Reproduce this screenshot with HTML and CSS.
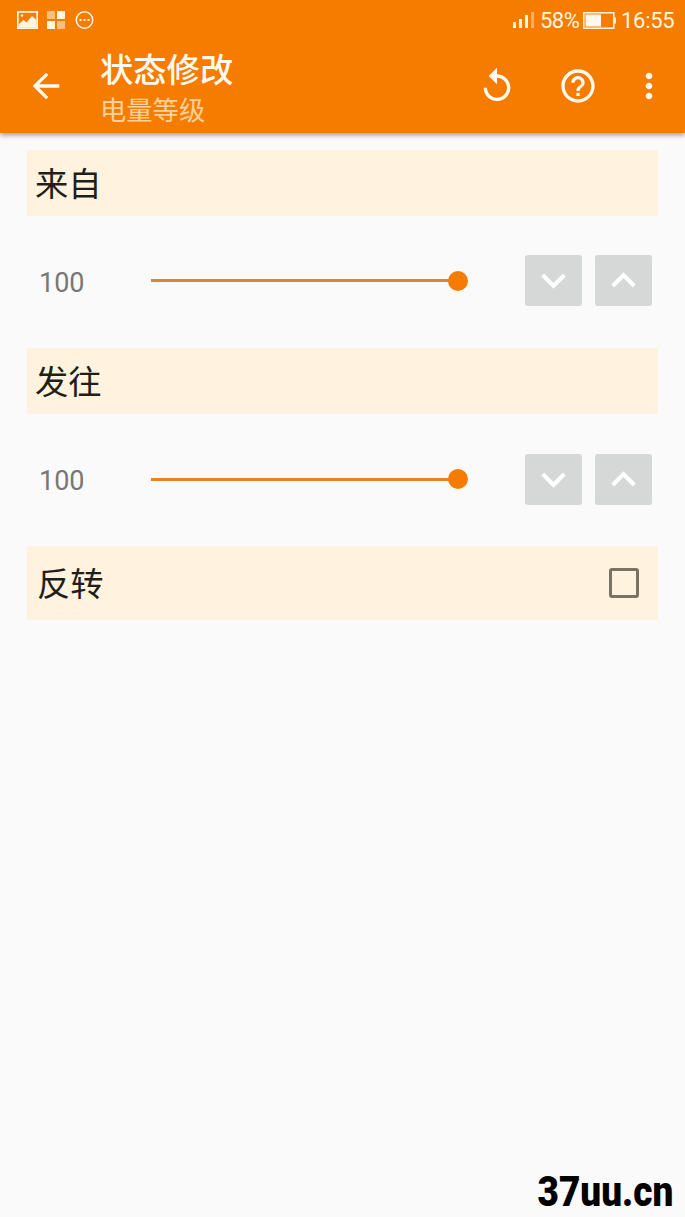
FILE: index.html
```
<!DOCTYPE html>
<html lang="zh-CN">
<head>
    <meta charset="UTF-8">
    <meta name="viewport" content="width=device-width, initial-scale=1.0">
    <title>状态修改</title>
    <link rel="stylesheet" href="styles.css">
</head>
<body>
    <header>
        <div class="status-bar">
            <svg class="status-left" width="80" height="20" viewBox="0 0 80 20">
                <path fill="#fff6e0" fill-rule="evenodd" d="M0 1h21v18H0zM1.7 2.7v14.6h17.6V2.7z"/>
                <path fill="#fff6e0" d="M1.500 17.500v-3l5-4.500 3 2.500 5.500-6.500 4.500 4v7.500z"/>
                <circle cx="5" cy="5.500" r="1.200" fill="#fff6e0"/>
                <path fill="#fbc080" d="M30 1h8v8h-8zM40 11h8v8h-8z"/>
                <path fill="#fff6e0" d="M40 1h8v8h-8zM30 11h8v8h-8z"/>
                <circle cx="67.500" cy="10" r="8.200" fill="none" stroke="#fff6e0" stroke-width="1.500"/>
                <path fill="#fff6e0" d="M62.500 9h2v2h-2zM66.500 9h2v2h-2zM70.500 9h2v2h-2z"/>
            </svg>
            <svg class="signal" width="21" height="16" viewBox="0 0 21 16">
                <path fill="#fff6e0" d="M0 10h3v6H0zM6 7h3v9H6zM12 3h3v13h-3z"/>
                <path fill="#fbb266" d="M18 0h3v16h-3z"/>
            </svg>
            <span class="percent">58%</span>
            <svg class="battery" width="33" height="17" viewBox="0 0 33 17">
                <rect x=".8" y=".8" width="30" height="15.400" fill="none" stroke="#fff6e0" stroke-width="1.500"/>
                <path fill="#fffaf0" d="M2.500 2.500h15.500v12h-15.500z"/>
                <path fill="#fff6e0" d="M31 5.500h2v6h-2z"/>
            </svg>
            <span class="clock">16:55</span>
        </div>
        <div class="app-bar">
            <svg class="icon back" viewBox="0 0 24 24"><path d="M20 11H7.830l5.590-5.590L12 4l-8 8 8 8 1.410-1.410L7.830 13H20v-2z"/></svg>
            <div class="titles">
                <h1>状态修改</h1>
                <p>电量等级</p>
            </div>
            <svg class="icon replay" viewBox="0 0 24 24"><path d="M12 5V1L7 6l5 5V7c3.310 0 6 2.690 6 6s-2.690 6-6 6-6-2.690-6-6H4c0 4.420 3.580 8 8 8s8-3.580 8-8-3.580-8-8-8z"/></svg>
            <svg class="icon help" viewBox="0 0 24 24"><path d="M11 18h2v-2h-2v2zm1-16C6.480 2 2 6.480 2 12s4.480 10 10 10 10-4.480 10-10S17.520 2 12 2zm0 18c-4.410 0-8-3.590-8-8s3.590-8 8-8 8 3.590 8 8-3.590 8-8 8zm0-14c-2.210 0-4 1.790-4 4h2c0-1.100.9-2 2-2s2 .9 2 2c0 2-3 1.750-3 5h2c0-2.250 3-2.500 3-5 0-2.210-1.790-4-4-4z"/></svg>
            <svg class="icon more" viewBox="0 0 24 24"><path d="M12 8c1.100 0 2-.9 2-2s-.9-2-2-2-2 .9-2 2 .9 2 2 2zm0 2c-1.100 0-2 .9-2 2s.9 2 2 2 2-.9 2-2-.9-2-2-2zm0 6c-1.100 0-2 .9-2 2s.9 2 2 2 2-.9 2-2-.9-2-2-2z"/></svg>
        </div>
    </header>

    <main>
        <h2>来自</h2>
        <div class="level">
            <span class="value">100</span>
            <div class="slider"><div class="thumb"></div></div>
            <button><svg viewBox="0 0 24 24"><path d="M7.410 8.590L12 13.170l4.590-4.580L18 10l-6 6-6-6z"/></svg></button>
            <button><svg viewBox="0 0 24 24"><path d="M7.410 15.410L12 10.830l4.590 4.580L18 14l-6-6-6 6z"/></svg></button>
        </div>

        <h2>发往</h2>
        <div class="level">
            <span class="value">100</span>
            <div class="slider"><div class="thumb"></div></div>
            <button><svg viewBox="0 0 24 24"><path d="M7.410 8.590L12 13.170l4.590-4.580L18 10l-6 6-6-6z"/></svg></button>
            <button><svg viewBox="0 0 24 24"><path d="M7.410 15.410L12 10.830l4.590 4.580L18 14l-6-6-6 6z"/></svg></button>
        </div>

        <div class="invert">
            <span>反转</span>
            <div class="checkbox"></div>
        </div>
    </main>

    <footer>37uu.cn</footer>
</body>
</html>
```

FILE: styles.css
```
* {
    box-sizing: border-box;
}
body {
    margin: 0;
    height: 1217px;
    display: flex;
    flex-direction: column;
    background-color: #fafafa;
    font-family: Roboto, "Noto Sans CJK SC", sans-serif;
    overflow: hidden;
}
h1, h2, p {
    margin: 0;
    font-weight: normal;
}
header {
    height: 133px;
    flex-shrink: 0;
    background-color: #f67c00;
    box-shadow: 0 2px 5px rgba(0, 0, 0, 0.4);
    color: #fff6e0;
}
.status-bar {
    height: 40px;
    padding: 0 10px 0 17px;
    display: flex;
    align-items: center;
    font-size: 22px;
}
.status-left {
    margin-right: auto;
}
.signal {
    margin-right: 6px;
}
.percent {
    width: 43px;
    letter-spacing: -0.5px;
}
.battery {
    margin-right: 5px;
}
.clock {
    width: 54px;
    letter-spacing: -0.3px;
}
.app-bar {
    height: 92px;
    display: flex;
    align-items: center;
    padding: 0 16px 0 26px;
}
.icon {
    width: 40px;
    height: 40px;
    fill: #fffaf0;
}
.titles {
    margin: 0 auto 0 34px;
    padding-top: 5px;
}
h1 {
    font-size: 33.3px;
    line-height: 44px;
    font-weight: 500;
    color: #fffaf0;
}
.titles p {
    font-size: 26.3px;
    line-height: 36px;
    color: #ffd199;
}
.replay {
    margin-right: 41px;
}
.help {
    margin-right: 31px;
}
main {
    flex: 1;
    padding: 16.500px 27px 0;
}
h2 {
    height: 66px;
    padding: 2px 0 0 8px;
    background-color: #fff2de;
    font-size: 33.3px;
    line-height: 66px;
    color: #211e18;
}
.level {
    height: 132.400px;
    display: flex;
    align-items: center;
    padding: 0 6px 2px 12px;
}
.value {
    width: 112px;
    padding-top: 4px;
    font-size: 27px;
    color: #777;
}
.slider {
    width: 307px;
    height: 3px;
    margin-right: auto;
    display: flex;
    align-items: center;
    justify-content: flex-end;
    background-color: #e0832a;
}
.thumb {
    width: 20px;
    height: 20px;
    margin-right: -10px;
    border-radius: 50%;
    background-color: #f67c00;
}
button {
    width: 57px;
    height: 51px;
    margin-left: 13px;
    padding: 0;
    display: flex;
    align-items: center;
    justify-content: center;
    border: none;
    border-radius: 3px;
    background-color: #d6d7d7;
}
button svg {
    width: 49px;
    height: 49px;
    fill: #fff;
}
.invert {
    height: 73.500px;
    padding: 0 19.500px 0 10px;
    display: flex;
    align-items: center;
    justify-content: space-between;
    background-color: #fff2de;
    font-size: 33.3px;
    color: #211e18;
}
.invert span {
    padding-bottom: 3px;
}
.checkbox {
    width: 30px;
    height: 30px;
    border: 3px solid #7b7263;
    border-radius: 3px;
}
footer {
    align-self: flex-end;
    padding: 0 12px 0 0;
    font-size: 42px;
    line-height: 50px;
    font-weight: 900;
    color: #000;
    transform: scaleX(0.88);
    transform-origin: 154px 0;
}
```
